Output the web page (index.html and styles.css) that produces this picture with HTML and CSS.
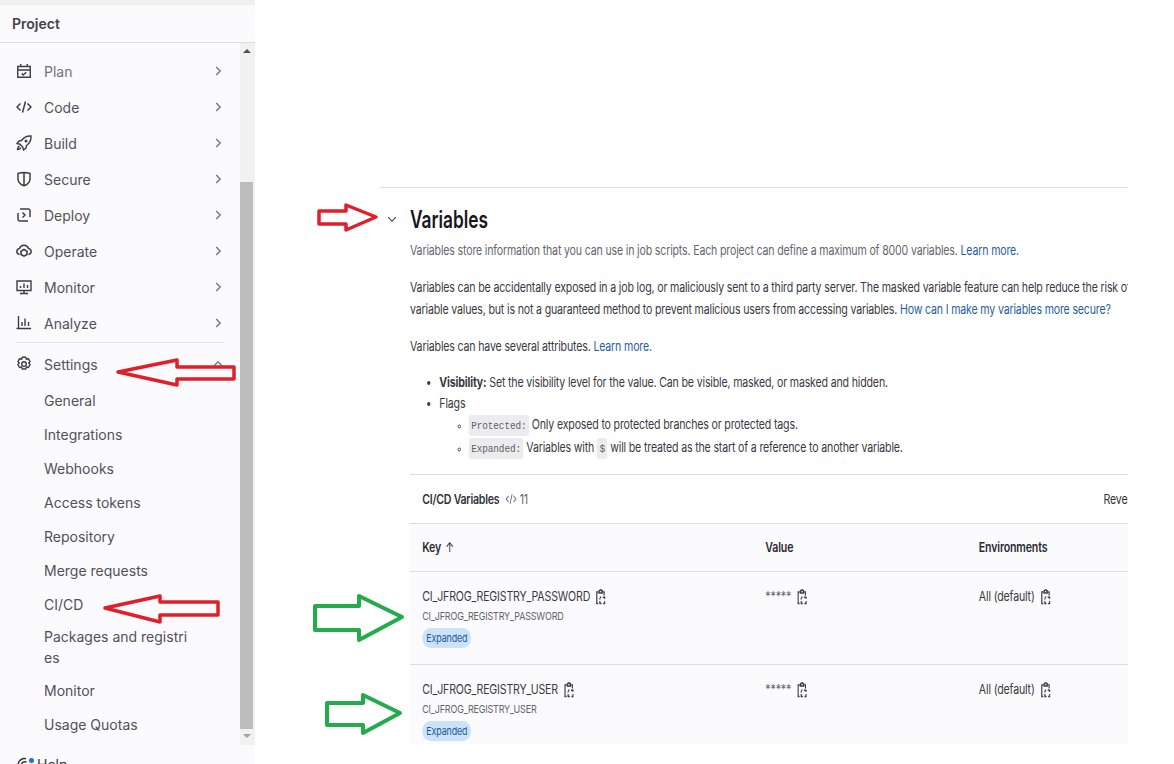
FILE: index.html
```html
<!DOCTYPE html>
<html lang="en">
<head>
    <meta charset="UTF-8">
    <title>Variables</title>
    <link rel="stylesheet" href="styles.css">
</head>
<body>
    <svg width="0" height="0" class="defs">
        <symbol id="chev" viewBox="0 0 16 16"><path d="M6 3.500 10.500 8 6 12.500" fill="none" stroke="currentColor" stroke-width="1.500"/></symbol>
        <symbol id="copy" viewBox="0 0 12 16"><path d="M3 3H1.200v11.500H3M9 3h1.200v3.500M4 3V1.800h.9a1.100 1.100 0 0 1 2.200 0H8V4H4z" fill="none" stroke="currentColor" stroke-width="1.400"/><path d="M5 8.200h1.500M8.500 8.200H11V10M11 12v2.500H9M7 14.500H5V12M5 10.500V9" fill="none" stroke="currentColor" stroke-width="1.400"/></symbol>
    </svg>

    <!-- sidebar -->
    <aside class="sidebar">
        <div class="top-strip"></div>
        <div class="sidebar-title">Project</div>
        <div class="sidebar-body">
            <nav class="nav">
                <a class="nav-item">
                    <svg class="nav-icon" viewBox="0 0 16 16"><path d="M1.750 3.500h12.500v10.750H1.750zM1.750 7h12.500M4.750 1v3M11.250 1v3M5.750 10.500l1.500 1.500 3-2.750" fill="none" stroke="currentColor" stroke-width="1.400"/></svg>
                    <span class="nav-label muted">Plan</span>
                    <svg class="chev"><use href="#chev"/></svg>
                </a>
                <a class="nav-item">
                    <svg class="nav-icon" viewBox="0 0 16 16"><path d="M4.500 4.500 1 8l3.500 3.500M11.500 4.500 15 8l-3.500 3.500M9.500 2.500l-3 11" fill="none" stroke="currentColor" stroke-width="1.500"/></svg>
                    <span class="nav-label">Code</span>
                    <svg class="chev"><use href="#chev"/></svg>
                </a>
                <a class="nav-item">
                    <svg class="nav-icon" viewBox="0 0 16 16"><path d="M15 1c-4-.3-7 1-9.500 4.500L3 6 1 8.500l3 .7 2.800 2.800.7 3L10 13l.5-2.500C14 8 15.300 5 15 1z" fill="none" stroke="currentColor" stroke-width="1.400"/><circle cx="10" cy="6" r="1.500" fill="currentColor"/><path d="M3.500 11c-1.200.6-1.800 1.600-2 3.500 1.900-.2 2.900-.8 3.500-2" fill="none" stroke="currentColor" stroke-width="1.400"/></svg>
                    <span class="nav-label">Build</span>
                    <svg class="chev"><use href="#chev"/></svg>
                </a>
                <a class="nav-item">
                    <svg class="nav-icon" viewBox="0 0 16 16"><path d="M2 2.500c4-1.300 8-1.300 12 0V8c0 3.200-2.500 5.500-6 6.800C4.500 13.500 2 11.200 2 8zM8 2v12.500" fill="none" stroke="currentColor" stroke-width="1.500"/></svg>
                    <span class="nav-label">Secure</span>
                    <svg class="chev"><use href="#chev"/></svg>
                </a>
                <a class="nav-item">
                    <svg class="nav-icon" viewBox="0 0 16 16"><path d="M4 2h8.500A1.500 1.500 0 0 1 14 3.500V10M12 14H3.500A1.500 1.500 0 0 1 2 12.500V6M6.500 5.500 9 8l-2.500 2.500" fill="none" stroke="currentColor" stroke-width="1.500"/></svg>
                    <span class="nav-label">Deploy</span>
                    <svg class="chev"><use href="#chev"/></svg>
                </a>
                <a class="nav-item">
                    <svg class="nav-icon" viewBox="0 0 16 16"><path d="M3.500 11.500C1.800 11.200.8 10 .8 8.500c0-1.700 1.200-2.800 2.700-3C4.200 3.500 6 2.300 8 2.300s3.800 1.200 4.500 3.200c1.500.2 2.700 1.300 2.700 3 0 1.500-1 2.700-2.700 3" fill="none" stroke="currentColor" stroke-width="1.400"/><path d="M8 6.500l3 1.700v3.300l-3 1.700-3-1.700V8.200z" fill="none" stroke="currentColor" stroke-width="1.600"/></svg>
                    <span class="nav-label">Operate</span>
                    <svg class="chev"><use href="#chev"/></svg>
                </a>
                <a class="nav-item">
                    <svg class="nav-icon" viewBox="0 0 16 16"><path d="M1 2h14v9.500H1zM8 11.500V14.500M4 14.500h8M4.500 9V7M8 9V4.500M11.500 9V6" fill="none" stroke="currentColor" stroke-width="1.400"/></svg>
                    <span class="nav-label">Monitor</span>
                    <svg class="chev"><use href="#chev"/></svg>
                </a>
                <a class="nav-item">
                    <svg class="nav-icon" viewBox="0 0 16 16"><path d="M2.500 1v12.500M.5 13.500H15M6 11V7M9 11V3.500M12.500 11V7" fill="none" stroke="currentColor" stroke-width="1.400"/></svg>
                    <span class="nav-label">Analyze</span>
                    <svg class="chev"><use href="#chev"/></svg>
                </a>
                <div class="nav-divider"></div>
                <a class="nav-item settings">
                    <svg class="nav-icon" viewBox="0 0 16 16"><path d="M6.300 1.200h3.400l.7 2 2-.5 1.700 2.900-1.400 1.500 1.400 1.500-1.700 2.900-2-.5-.7 2H6.300l-.7-2-2 .5-1.700-2.900 1.400-1.500-1.400-1.500 1.700-2.900 2 .5z" fill="none" stroke="currentColor" stroke-width="1.400" stroke-linejoin="round"/><circle cx="8" cy="8.100" r="2.300" fill="none" stroke="currentColor" stroke-width="1.400"/></svg>
                    <span class="nav-label">Settings</span>
                    <svg class="chev chev-up"><use href="#chev"/></svg>
                </a>
                <ul class="subnav">
                    <li>General</li>
                    <li>Integrations</li>
                    <li>Webhooks</li>
                    <li>Access tokens</li>
                    <li>Repository</li>
                    <li>Merge requests</li>
                    <li>CI/CD</li>
                    <li class="two-line">Packages and registri<br>es</li>
                    <li>Monitor</li>
                    <li>Usage Quotas</li>
                </ul>
            </nav>
            <div class="scrollbar">
                <div class="arrow-up"></div>
                <div class="thumb"></div>
                <div class="arrow-down"></div>
            </div>
        </div>
        <div class="help">
            <svg class="help-icon" viewBox="0 0 16 16"><path d="M14 8a6.500 6.500 0 1 1-5-6.300M4.500 8a3.500 3.500 0 0 1 5-3" fill="none" stroke="currentColor" stroke-width="1.500"/></svg>
            <span class="help-dot"></span>
            <span>Help</span>
        </div>
    </aside>

    <!-- main -->
    <main class="main">
        <section class="panel">
            <div class="panel-head">
                <svg class="panel-chev" viewBox="0 0 16 16"><path d="M3 5.500 8 11l5-5.500" fill="none" stroke="currentColor" stroke-width="1.400"/></svg>
                <h2>Variables</h2>
            </div>
            <div class="panel-body">
                <p class="intro">Variables store information that you can use in job scripts. Each project can define a maximum of 8000 variables. <a>Learn more.</a></p>
                <p>Variables can be accidentally exposed in a job log, or maliciously sent to a third party server. The masked variable feature can help reduce the risk of exposing<br>variable values, but is not a guaranteed method to prevent malicious users from accessing variables. <a>How can I make my variables more secure?</a></p>
                <p>Variables can have several attributes. <a>Learn more.</a></p>
                <ul class="attrs">
                    <li><b>Visibility:</b> Set the visibility level for the value. Can be visible, masked, or masked and hidden.</li>
                    <li>Flags
                        <ul>
                            <li><code>Protected:</code> Only exposed to protected branches or protected tags.</li>
                            <li><code>Expanded:</code> Variables with <code>$</code> will be treated as the start of a reference to another variable.</li>
                        </ul>
                    </li>
                </ul>

                <div class="vars">
                    <div class="vars-head">
                        <div class="vars-title">
                            <b>CI/CD Variables</b>
                            <svg class="count-icon" viewBox="0 0 16 16"><path d="M4.500 4.500 1 8l3.500 3.500M11.500 4.500 15 8l-3.500 3.500M9.500 2.500l-3 11" fill="none" stroke="currentColor" stroke-width="1.300"/></svg>
                            <span class="count">11</span>
                        </div>
                        <span class="reveal">Reveal values</span>
                    </div>
                    <div class="vars-row heading">
                        <div>Key <span class="sort">↑</span></div>
                        <div>Value</div>
                        <div>Environments</div>
                    </div>
                    <div class="vars-row">
                        <div>
                            <div class="key">CI_JFROG_REGISTRY_PASSWORD <svg class="copy"><use href="#copy"/></svg></div>
                            <div class="desc">CI_JFROG_REGISTRY_PASSWORD</div>
                            <span class="badge">Expanded</span>
                        </div>
                        <div class="val">***** <svg class="copy"><use href="#copy"/></svg></div>
                        <div class="env">All (default) <svg class="copy"><use href="#copy"/></svg></div>
                    </div>
                    <div class="vars-row">
                        <div>
                            <div class="key">CI_JFROG_REGISTRY_USER <svg class="copy"><use href="#copy"/></svg></div>
                            <div class="desc">CI_JFROG_REGISTRY_USER</div>
                            <span class="badge">Expanded</span>
                        </div>
                        <div class="val">***** <svg class="copy"><use href="#copy"/></svg></div>
                        <div class="env">All (default) <svg class="copy"><use href="#copy"/></svg></div>
                    </div>
                </div>
            </div>
        </section>
    </main>

    <!-- hand drawn arrows on top of the screenshot -->
    <svg class="marks" viewBox="0 0 1174 764">
        <g class="mark-red">
            <path d="M118 372 177 360V367H234V379H177V385Z"/>
            <path d="M105 608 160 596V602H218V615H160V622Z"/>
            <path d="M376 217 346 205V211H319V224H346V230Z"/>
        </g>
        <g class="mark-green">
            <path d="M402 617 359 596V606H315V630H359V640Z"/>
            <path d="M400 713 363 695V703H327V725H363V733Z"/>
        </g>
    </svg>
</body>
</html>
```

FILE: styles.css
```css
* {
    box-sizing: border-box;
}
html, body {
    margin: 0;
    height: 764px;
    overflow: hidden;
}
body {
    position: relative;
    display: flex;
    font-family: Inter, "Liberation Sans", sans-serif;
    background-color: #fff;
    color: #333238;
}
.defs {
    position: absolute;
}

/* sidebar */
.sidebar {
    width: 255px;
    flex-shrink: 0;
    height: 764px;
    display: flex;
    flex-direction: column;
    background-color: #fbfafd;
    overflow: hidden;
}
.top-strip {
    height: 5px;
    flex-shrink: 0;
    background-color: #f0f0f0;
}
.sidebar-title {
    height: 38px;
    flex-shrink: 0;
    padding: 10px 12px 0;
    font-size: 14px;
    font-weight: 600;
    line-height: 18px;
    color: #434248;
    border-bottom: 1px solid #dcdcde;
}
.sidebar-body {
    height: 702px;
    flex-shrink: 0;
    display: flex;
}
.nav {
    width: 240px;
    padding: 10px 16px 0;
    font-size: 14px;
    color: #535158;
}
.nav-item {
    height: 36px;
    display: flex;
    align-items: center;
}
.nav-icon {
    width: 16px;
    height: 16px;
    color: #3f3e44;
    flex-shrink: 0;
}
.nav-label {
    margin-left: 12px;
    flex: 1;
}
.muted {
    color: #737278;
}
.chev {
    width: 14px;
    height: 14px;
    margin-right: -1px;
    color: #737278;
}
.chev-up {
    transform: rotate(-90deg);
}
.nav-divider {
    height: 1px;
    margin-top: 1px;
    background-color: #e4e4e7;
}
.settings {
    height: 42px;
}
.subnav {
    list-style: none;
    margin: -1px 0 0;
    padding: 0 0 0 28px;
}
.subnav li {
    height: 34px;
    line-height: 34px;
}
.subnav .two-line {
    height: 52px;
    line-height: 21px;
    padding-top: 4px;
}
.scrollbar {
    width: 15px;
    display: flex;
    flex-direction: column;
    background-color: #f1f1f1;
}
.arrow-up, .arrow-down {
    width: 0;
    height: 0;
    margin-left: 3px;
    border-left: 4px solid transparent;
    border-right: 4px solid transparent;
}
.arrow-up {
    margin-top: 6px;
    border-bottom: 4px solid #505050;
}
.arrow-down {
    margin-top: 5px;
    border-top: 4px solid #a3a3a3;
}
.thumb {
    width: 13px;
    height: 547px;
    margin-top: 129px;
    background-color: #bdbdbd;
}
.help {
    position: relative;
    display: flex;
    align-items: center;
    gap: 4px;
    padding: 11px 0 0 17px;
    font-size: 14px;
    color: #333238;
}
.help-icon {
    width: 16px;
    height: 16px;
}
.help-dot {
    position: absolute;
    left: 29px;
    top: 13px;
    width: 5px;
    height: 5px;
    border-radius: 50%;
    background-color: #1f75cb;
}

/* main */
.main {
    flex: 1;
    height: 744px;
    padding: 187px 46px 0 125px;
    overflow: hidden;
}
.panel {
    border-top: 1px solid #dcdcde;
    overflow: hidden;
    height: 557px;
}
.panel-head {
    display: flex;
    align-items: center;
    height: 62px;
}
.panel-chev {
    width: 12px;
    height: 12px;
    margin: 0 12px 0 6px;
    color: #333238;
}
h2 {
    margin: 0;
    font-size: 24px;
    font-weight: 600;
    color: #17161c;
    transform: scaleX(0.72);
    transform-origin: left center;
}

.panel-body {
    width: 1000px;
    margin-left: 30px;
    margin-top: -11px;
    font-size: 13px;
    line-height: 22px;
    letter-spacing: -0.2px;
    white-space: nowrap;
    color: #3a3940;
    transform: scaleX(0.815);
    transform-origin: left top;
}
.panel-body p {
    margin: 0 0 15px;
}
.panel-body .intro {
    color: #66656b;
}
.panel-body a {
    color: #1f5f9e;
}
.attrs {
    margin: 0;
    padding-left: 36px;
}
.attrs ul {
    padding-left: 36px;
}
.attrs li {
    line-height: 21px;
}
.attrs ul li {
    line-height: 21.500px;
}
.attrs ul li::marker {
    font-size: 10px;
}
code {
    font-family: "Liberation Mono", monospace;
    font-size: 11.500px;
    letter-spacing: -0.1px;
    padding: 4px 3px;
    border-radius: 3px;
    color: #5f5e64;
    background-color: #ececef;
}
.vars {
    margin-top: 15px;
    border-top: 1px solid #dcdcde;
}
.vars-head {
    height: 48px;
    padding-left: 15px;
    display: grid;
    grid-template-columns: 836px auto;
    align-items: center;
    color: #333238;
}
.vars-title {
    display: flex;
    align-items: center;
    gap: 7px;
}
.vars-title b {
    font-weight: 600;
    letter-spacing: -0.3px;
}
.count-icon {
    width: 14px;
    height: 14px;
    color: #737278;
}
.count {
    margin-left: -3px;
    color: #66656b;
}
.vars-row {
    display: grid;
    grid-template-columns: 421px 262px 1fr;
    height: 93px;
    padding: 13px 0 0 15px;
    background-color: #fbfafd;
    border-top: 1px solid #dcdcde;
}
.heading {
    height: 48px;
    padding-top: 12px;
    font-weight: 600;
    color: #2b2a30;
}
.sort {
    margin-left: 2px;
    font-weight: 400;
}
.copy {
    width: 12px;
    height: 16px;
    margin-left: 4px;
    vertical-align: -4px;
    color: #3a3940;
}
.desc {
    font-size: 11px;
    line-height: 19px;
    color: #66656b;
}
.badge {
    display: inline-block;
    margin-top: 2px;
    padding: 0 5px;
    height: 20px;
    line-height: 20px;
    font-size: 11px;
    color: #1f5a96;
    background-color: #cbe2f9;
    border-radius: 10px;
}
.val {
    color: #66656b;
}

/* arrows */
.marks {
    position: absolute;
    left: 0;
    top: 0;
    width: 1174px;
    height: 764px;
    pointer-events: none;
}
.marks path {
    fill: none;
    stroke-width: 3.500;
    stroke-linejoin: round;
}
.mark-red path {
    stroke: #e11f2b;
}
.mark-green path {
    stroke: #22ac4a;
    stroke-width: 4;
}
```
